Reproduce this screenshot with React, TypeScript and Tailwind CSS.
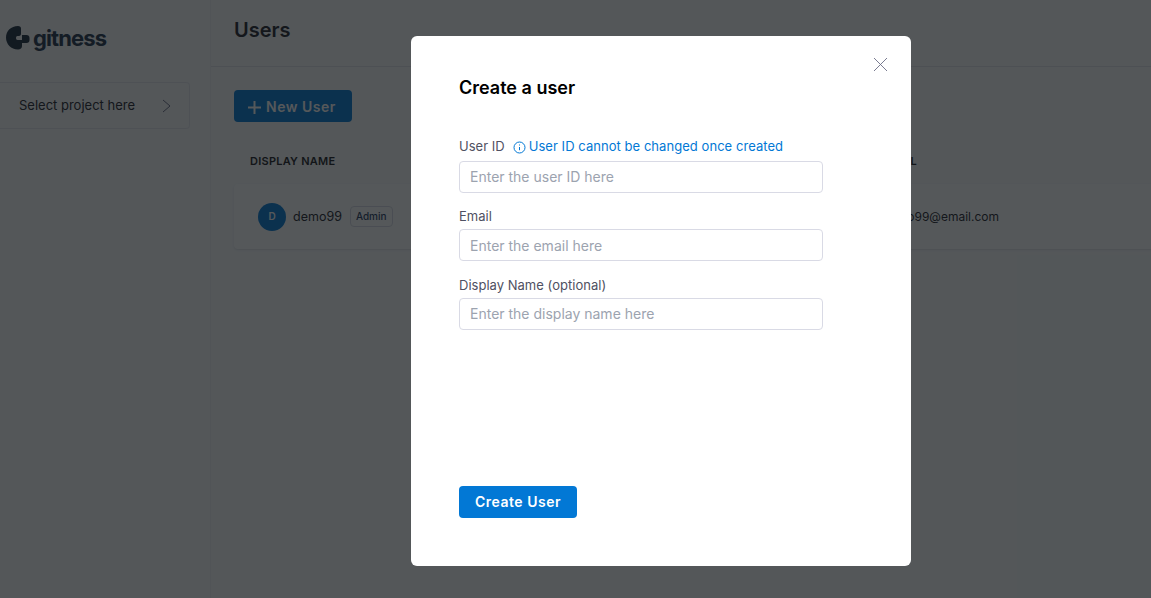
const inter = { fontFamily: "Inter, 'Liberation Sans', sans-serif" };

function Logo() {
  return (
    <div className="flex items-center">
      <svg width="25" height="25" viewBox="0 0 25 25" className="ml-[5px] shrink-0">
        <path
          d="M13 1C6 1 1 6 1 12.500S6 24.500 13 24.500c2.500 0 4-1.500 4-3.500v-3h4.500c1.900 0 3-1.100 3-3v-2c0-1.900-1.100-3-3-3H17v5h-4.500c-1 0-1.500-.8-1.500-2s.5-2 1.500-2H14c1.500 0 2-1 2-2.500V3.500C16 2 15 1 13 1Z"
          fill="#1b2a3c"
        />
      </svg>
      <span className="ml-[3px] text-[22px] leading-none font-bold tracking-[-0.9px] text-[#22324a]">gitness</span>
    </div>
  );
}

function Field({ label, placeholder, hint, inputGap, inputPad, className }: { label: string; placeholder: string; hint?: string; inputGap: string; inputPad: string; className?: string }) {
  return (
    <div className={`flex flex-col ${className ?? ""}`}>
      <div className="flex h-[20px] items-center pt-[2px] text-[13px] font-normal tracking-[0.02px] text-[#4f5162]">
        <span>{label}</span>
        {hint && (
          <span className="ml-2 flex items-center gap-[3px] tracking-[0.05px] text-[#0278d5]">
            <svg width="13" height="13" viewBox="0 0 13 13" fill="none" stroke="#0278d5">
              <circle cx="6.500" cy="6.500" r="5.500" />
              <path d="M6.500 6v3.200M6.500 3.500v1" />
            </svg>
            {hint}
          </span>
        )}
      </div>
      <input
        readOnly
        placeholder={placeholder}
        className={`${inputGap} ${inputPad} h-8 w-[364px] rounded-[4px] border border-[#d9dae5] bg-white px-[10px] text-sm text-[#383946] outline-none placeholder:text-[#9ca3af]`}
      />
    </div>
  );
}

export default function App() {
  return (
    <div className="relative flex h-[598px] w-[1151px] overflow-hidden bg-[#fafbfc]" style={inter}>
      <aside className="flex w-[211px] shrink-0 flex-col border-r border-[#f0f0f3] bg-[#fafbfc]">
        <div className="flex h-[82px] items-start pt-[25px]">
          <Logo />
        </div>
        <div className="flex h-[47px] w-[190px] items-center justify-between rounded-r-[4px] border border-l-0 border-[#e8e8ee] pr-[18px] pl-[19px] text-[13px] text-[#22222a]">
          <span>Select project here</span>
          <svg width="9" height="14" viewBox="0 0 9 14" fill="none" stroke="#6b6d85">
            <path d="M1 1l7 6-7 6" />
          </svg>
        </div>
      </aside>

      <main className="flex min-w-0 flex-1 flex-col">
        <header className="flex h-[67px] shrink-0 items-start border-b border-[#e2e3ea] bg-[#fafbfc] pt-[17px] pl-[23px]">
          <h1 className="text-[20px] leading-[26px] font-semibold text-[#22222a]">Users</h1>
        </header>
        <div className="pt-[23px] pl-[23px]">
          <button className="flex h-8 w-[118px] items-center justify-center gap-[5px] rounded-[4px] bg-[#0278d5] pt-[2px] pr-[2px] text-sm font-semibold tracking-[0.5px] text-white">
            <svg width="13" height="13" viewBox="0 0 13 13" stroke="#fff" strokeWidth="2">
              <path d="M6.500 0v13M0 6.500h13" />
            </svg>
            New User
          </button>
          <div className="flex h-[62px] items-end justify-between pr-[234px] pb-[16px] pl-[16px] text-[11px] leading-[13px] font-semibold tracking-[0.25px] text-[#1a1a20]">
            <span>DISPLAY NAME</span>
            <span>EMAIL</span>
          </div>
          <div className="flex h-[65px] w-[1000px] items-center justify-between rounded-[4px] bg-white pr-[235px] pl-[24px] shadow-[0_1px_2px_rgba(96,97,112,0.16)]">
            <div className="flex items-center">
              <span className="flex h-7 w-7 items-center justify-center rounded-full bg-[#0278d5] text-[10px] font-semibold text-white">D</span>
              <span className="ml-[7px] pt-[1px] text-[12.500px] text-[#22222a]">demo99</span>
              <span className="ml-[8px] rounded-[4px] border border-[#d9dae5] px-[5px] py-[3px] text-[10px] leading-[13px] font-medium text-[#1f3a5f]">Admin</span>
            </div>
            <span className="pt-[1px] text-[12px] text-[#22222a]">demo99@email.com</span>
          </div>
        </div>
      </main>

      <div className="absolute inset-0 flex items-start justify-center bg-[rgba(15,20,22,0.71)] pt-[36px] pl-[171px]">
        <div className="relative flex h-[530px] w-[500px] flex-col rounded-[6px] bg-white pt-[40px] pb-[48px] pl-[48px]">
          <button className="absolute top-[21px] right-[23px]">
            <svg width="15" height="15" viewBox="0 0 15 15" stroke="#6b6d85" strokeWidth="0.900">
              <path d="M1 1l13 13M14 1L1 14" />
            </svg>
          </button>
          <h2 className="text-[18px] leading-[23px] font-semibold text-black">Create a user</h2>
          <div className="mt-[37px] flex flex-col gap-[13px]">
            <Field label="User ID" placeholder="Enter the user ID here" hint="User ID cannot be changed once created" inputGap="mt-[5px]" inputPad="pb-[1px]" />
            <Field label="Email" placeholder="Enter the email here" inputGap="mt-[3px]" inputPad="pb-0" />
            <Field label="Display Name (optional)" placeholder="Enter the display name here" inputGap="mt-[3px]" inputPad="pb-[1px]" className="pt-[1px]" />
          </div>
          <button className="mt-auto h-8 w-[118px] rounded-[4px] bg-[#0278d5] text-sm font-semibold tracking-[0.5px] text-white">
            Create User
          </button>
        </div>
      </div>
    </div>
  );
}
